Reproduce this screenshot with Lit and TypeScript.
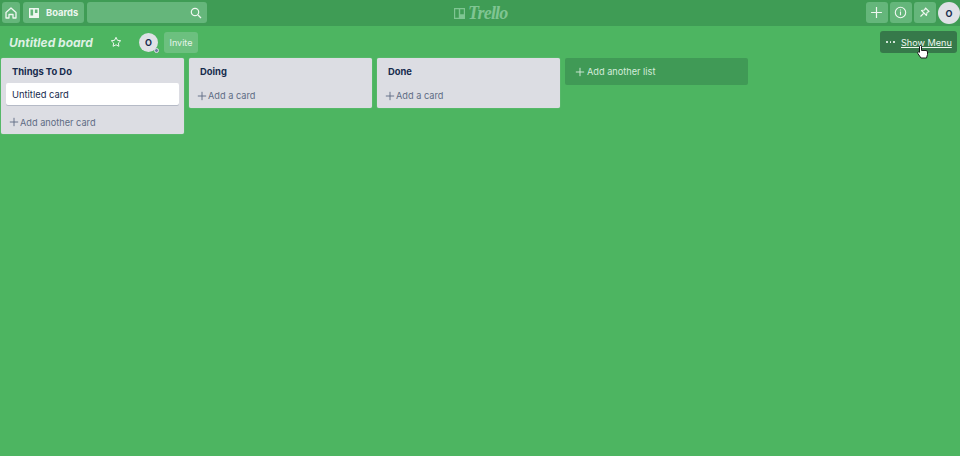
import { LitElement, html, css } from "lit";
import { customElement } from "lit/decorators.js";

const plus = (s: number) => html`<svg class="plus" width=${s} height=${s} viewBox="0 0 12 12"><path d="M6 1v10M1 6h10" fill="none" stroke="currentColor" stroke-width="1.1"/></svg>`;

@customElement("app-root")
export class AppRoot extends LitElement {
  static styles = css`
    :host { display: block; width: 960px; height: 456px; overflow: hidden; background: #4db561; font-family: Inter, "Liberation Sans", sans-serif; position: relative; }
    .top { height: 26px; background: #3f9c55; display: flex; align-items: flex-start; gap: 3px; padding: 2px 0 0 2px; box-sizing: border-box; position: relative; }
    .tb { height: 21px; background: #65b67b; border-radius: 3px; display: flex; align-items: center; justify-content: center; color: #eef7f0; flex: none; box-sizing: border-box; }
    .home { width: 18px; }
    .boards { width: 61px; gap: 6px; justify-content: flex-start; padding-left: 5px; font-size: 9.4px; font-weight: 700; }
    .search { width: 120px; justify-content: flex-end; padding-right: 5px; }
    .logo { position: absolute; left: 453px; top: 3px; display: flex; align-items: center; gap: 2px; color: #7fc592; font: italic 700 18px/20px "Liberation Serif", serif; letter-spacing: -0.8px; }
    .right { margin-left: auto; display: flex; align-items: flex-start; gap: 2.5px; }
    .r { width: 21.5px; }
    .avatar { border-radius: 50%; background: #dfe1e6; color: #172b4d; font-weight: 700; display: flex; align-items: center; justify-content: center; flex: none; }
    .right .avatar { width: 22px; height: 22px; font-size: 9px; }
    .bar { height: 32px; display: flex; align-items: center; box-sizing: border-box; padding: 0 3px 0 9px; }
    .title { font-size: 12px; font-weight: 700; font-style: italic; color: #dff1e4; width: 84px; white-space: nowrap; }
    .star { margin-left: 17px; color: #eef7f0; display: flex; }
    .bar .avatar { width: 19px; height: 19px; font-size: 9px; margin-left: 17px; position: relative; }
    .badge { position: absolute; right: -1px; bottom: -1px; width: 5px; height: 5px; border-radius: 50%; background: #6d7ea0; border: 1px solid #dfe1e6; box-sizing: border-box; }
    .invite { margin-left: 6px; width: 34px; height: 21px; border-radius: 3px; background: #6cc07f; color: #e6f4ea; font-size: 9px; display: flex; align-items: center; justify-content: center; }
    .menu { margin-left: auto; width: 77px; height: 22px; border-radius: 3px; background: #36794a; color: #eef7f0; font-size: 9.1px; display: flex; align-items: center; box-sizing: border-box; padding-left: 6px; position: relative; }
    .dots { width: 15px; flex: none; display: flex; gap: 2px; }
    .dots i { width: 1.5px; height: 1.5px; border-radius: 50%; background: #eef7f0; }
    .menu u { text-underline-offset: 1px; white-space: nowrap; }
    .cursor { position: absolute; left: 37px; top: 14px; }
    .board { display: flex; align-items: flex-start; gap: 5px; padding: 0 0 0 1px; }
    .list { width: 183px; background: #dcdde3; border-radius: 2px; box-sizing: border-box; display: flex; flex-direction: column; box-shadow: 0 0 1px rgba(255,255,255,.5); }
    .name { font-size: 9.4px; font-weight: 700; color: #172b4d; height: 25px; box-sizing: border-box; display: flex; align-items: center; padding: 2px 0 0 11px; }
    .card { margin: 0 5px; height: 22px; background: #fff; border-radius: 2px; box-shadow: 0 1px 0 #b5bac6; font-size: 9.4px; color: #172b4d; display: flex; align-items: center; padding-left: 6px; }
    .add { height: 25px; display: flex; align-items: center; gap: 1px; font-size: 9.2px; color: #5e6c84; padding-left: 8px; box-sizing: border-box; }
    .card + .add { height: 29px; padding-top: 5px; }
    .addlist { width: 183px; height: 27px; background: #409a56; border-radius: 2px; color: #d4ecdb; font-size: 9.2px; display: flex; align-items: center; gap: 2px; padding-left: 10px; box-sizing: border-box; }
    .plus { flex: none; }
  `;

  list(name: string, add: string, card?: string) {
    return html`<section class="list">
      <div class="name">${name}</div>
      ${card ? html`<div class="card">${card}</div>` : ""}
      <div class="add">${plus(10)}<span>${add}</span></div>
    </section>`;
  }

  render() {
    return html`
      <header class="top">
        <div class="tb home"><svg width="14" height="14" viewBox="0 0 14 14" fill="none" stroke="currentColor" stroke-width="1.3"><path d="M2 6.5 7 2l5 4.5V12H9V8.5H5V12H2z" stroke-linejoin="round"/></svg></div>
        <div class="tb boards"><svg width="12" height="12" viewBox="0 0 12 12"><path fill="currentColor" fill-rule="evenodd" d="M1.5 1h9a.5.5 0 0 1 .5.5v9a.5.5 0 0 1-.5.5h-9a.5.5 0 0 1-.5-.5v-9A.5.5 0 0 1 1.5 1zM2.5 2.5v6h2.600v-6zm4.400 0v3.600h2.600V2.5z"/></svg><span>Boards</span></div>
        <div class="tb search"><svg width="12" height="12" viewBox="0 0 12 12" fill="none" stroke="currentColor" stroke-width="1.2"><circle cx="5" cy="5" r="3.7"/><path d="m8 8 3 3"/></svg></div>
        <div class="logo"><svg width="13" height="13" viewBox="0 0 13 13"><path fill="currentColor" fill-rule="evenodd" d="M1 1h11v11H1zM2.200 2.200v8.600h3.600V2.200zm5 0v5h3.600v-5z"/></svg><span>Trello</span></div>
        <div class="right">
          <div class="tb r">${plus(13)}</div>
          <div class="tb r"><svg width="13" height="13" viewBox="0 0 13 13" fill="none" stroke="currentColor" stroke-width="1.1"><circle cx="6.5" cy="6.5" r="5.2"/><path d="M6.5 5.600v3.600M6.5 3.400v1.100"/></svg></div>
          <div class="tb r"><svg width="13" height="13" viewBox="0 0 13 13" fill="none" stroke="currentColor" stroke-width="1.1" stroke-linejoin="round"><path d="M7.5 2 11 5.500 9 6.500 8.500 9.500 3.500 4.500 6.500 4zM6 7l-3.500 3.500"/></svg></div>
          <div class="avatar">O</div>
        </div>
      </header>
      <div class="bar">
        <div class="title">Untitled board</div>
        <div class="star"><svg width="12" height="12" viewBox="0 0 12 12" fill="none" stroke="currentColor" stroke-width="1"><path d="m6 1.300 1.450 3 3.250.45-2.350 2.300.55 3.250L6 8.750 3.100 10.300l.55-3.250-2.350-2.300 3.250-.45z" stroke-linejoin="round"/></svg></div>
        <div class="avatar">O<span class="badge"></span></div>
        <div class="invite">Invite</div>
        <div class="menu"><span class="dots"><i></i><i></i><i></i></span><u>Show Menu</u>
          <svg class="cursor" width="11" height="14" viewBox="0 0 11 14"><path d="M2.500 1.500a1 1 0 0 1 2 0V5.500h4.500a1.500 1.500 0 0 1 1.500 1.500v2.500L9.500 13H4L.8 8.500a1 1 0 0 1 1.700-1.200z" fill="#fff" stroke="#1a1a1a" stroke-width="1"/></svg>
        </div>
      </div>
      <main class="board">
        ${this.list("Things To Do", "Add another card", "Untitled card")}
        ${this.list("Doing", "Add a card")}
        ${this.list("Done", "Add a card")}
        <div class="addlist">${plus(10)}<span>Add another list</span></div>
      </main>
    `;
  }
}
